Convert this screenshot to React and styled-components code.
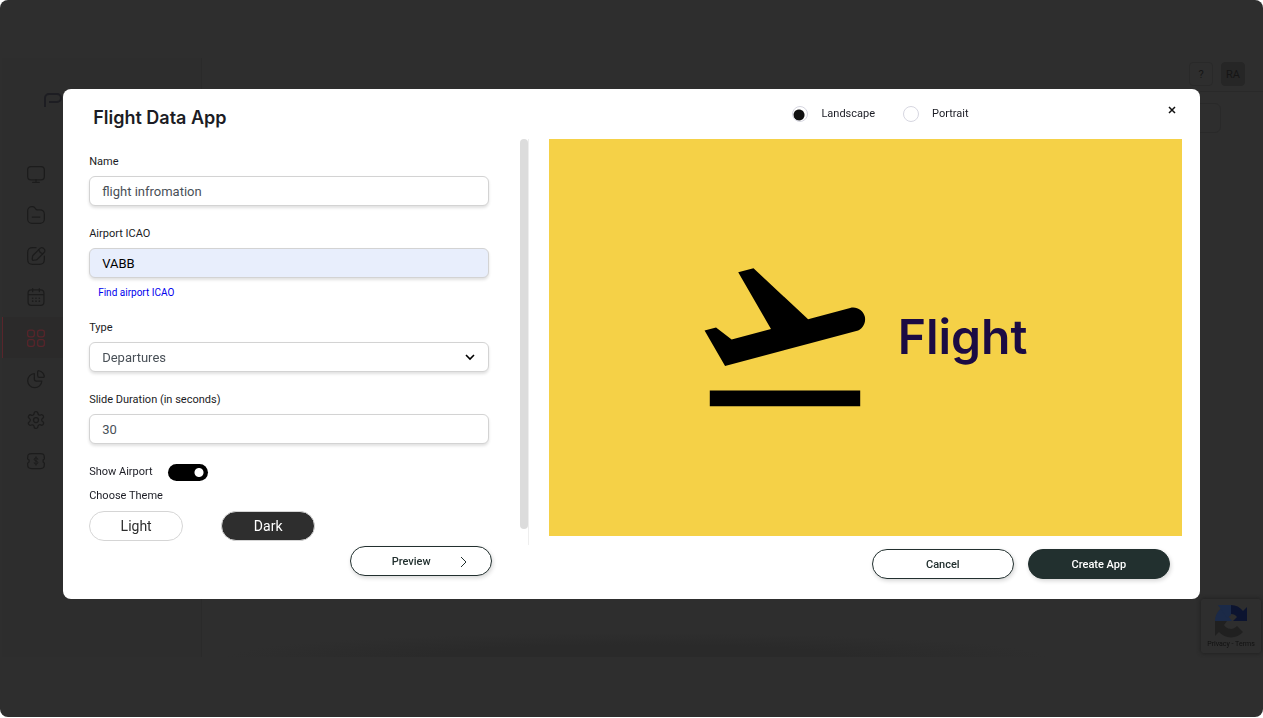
import React, { useState } from 'react';
import styled, { createGlobalStyle } from 'styled-components';

const GlobalStyle = createGlobalStyle`
  * {
    box-sizing: border-box;
  }

  body {
    margin: 0;
    background: #fff;
    font-family: Roboto, 'Liberation Sans', sans-serif;
    color: #1b1c24;
  }

  button,
  input,
  select {
    font-family: inherit;
    margin: 0;
  }
`;

/* dimmed dashboard behind the dialog */

const Page = styled.div`
  display: flex;
  flex-direction: column;
  min-height: calc(100vh - 1px);
  padding: 58px 0 60px 2px;
  background: #2e2e2e;
  border-radius: 8px;
`;

const Screen = styled.div`
  flex: 1;
  display: flex;
`;

const Sidebar = styled.nav`
  width: 200px;
  background: #2d2d2d;
  border-right: 1px solid #2a2a2a;
`;

const Brand = styled.div`
  height: 95px;
  padding: 34px 0 0 41px;
  color: #1d1d22;
`;

const NavItem = styled.a`
  display: flex;
  align-items: center;
  height: 41px;
  padding-left: 23px;
  border-left: 1px solid ${({ $active }) => ($active ? '#59252b' : 'transparent')};
  background: ${({ $active }) => ($active ? '#2b2a2a' : 'transparent')};
  color: ${({ $active }) => ($active ? '#59252b' : '#1c1c1c')};
`;

const Main = styled.div`
  flex: 1;
  display: flex;
  flex-direction: column;
  background: radial-gradient(ellipse 410px 24px at 41% 100%, #2a2a2a 50%, #2e2e2e 100%);
`;

const TopBar = styled.header`
  display: flex;
  justify-content: flex-end;
  gap: 8px;
  height: 34px;
  padding: 4px 18px 0 0;
  border-bottom: 1px solid #292929;
`;

const Chip = styled.button`
  width: 24px;
  height: 24px;
  padding: 0;
  border: 1px solid ${({ $filled }) => ($filled ? '#262626' : '#292929')};
  border-radius: 4px;
  background: ${({ $filled }) => ($filled ? '#262626' : 'transparent')};
  color: #151515;
  font-size: 11px;
`;

const Search = styled.div`
  align-self: flex-end;
  width: 300px;
  height: 30px;
  margin: 11px 42px 0 0;
  border: 1px solid #292929;
  border-radius: 6px;
`;

const Captcha = styled.div`
  position: fixed;
  right: 2px;
  bottom: 65px;
  display: flex;
  flex-direction: column;
  align-items: center;
  gap: 2px;
  width: 60px;
  height: 54px;
  padding-top: 5px;
  border-radius: 2px;
  background: #2e2e2e;
  box-shadow: 0 0 4px #1c1c1c;
  color: #111;
  font-size: 7px;
  line-height: 8px;
`;

/* dialog */

const Overlay = styled.div`
  position: absolute;
  top: 0;
  left: 0;
  right: 0;
  display: flex;
  justify-content: center;
  padding-top: 89px;
`;

const Dialog = styled.section`
  display: grid;
  grid-template-columns: minmax(0, 41fr) minmax(0, 59fr);
  width: 90%;
  padding-bottom: 20px;
  border-radius: 8px;
  background: #fff;
`;

const Pane = styled.div`
  display: flex;
  flex-direction: column;
`;

const Title = styled.h1`
  height: 50px;
  margin: 0;
  padding: 17px 0 0 30px;
  font-family: Inter, sans-serif;
  font-size: 18px;
  line-height: 24px;
  font-weight: 600;
`;

const ScrollArea = styled.div`
  display: flex;
  height: 406px;
  border-right: 1px solid #eee;
`;

const Rail = styled.div`
  width: 8px;
  height: 390px;
  border-radius: 4px;
  background: #dcdcdc;
`;

const Form = styled.form`
  flex: 1;
  padding: 14px 31px 0 26px;
`;

const Field = styled.div`
  display: flex;
  flex-direction: column;
  margin-bottom: 19px;
`;

const Label = styled.label`
  font-size: 11px;
  line-height: 18px;
`;

const Input = styled.input`
  width: 100%;
  height: 30px;
  margin-top: 5px;
  padding: 0 12px;
  border: 1px solid #d3d3d3;
  border-radius: 6px;
  background: ${({ $autofilled }) => ($autofilled ? '#e8eefc' : '#fff')};
  box-shadow: 0 2px 3px rgba(0, 0, 0, 0.12);
  color: ${({ $autofilled }) => ($autofilled ? '#000' : '#495057')};
  font-size: 13px;
  outline: none;
`;

const SelectWrap = styled.div`
  position: relative;

  svg {
    position: absolute;
    right: 14px;
    bottom: 10px;
    pointer-events: none;
  }
`;

const Select = styled(Input)`
  display: block;
  appearance: none;
`;

const FindLink = styled.a`
  margin: 6px 0 0 9px;
  font-size: 10px;
  line-height: 18px;
  color: #00e;
  text-decoration: none;

  & + & {
    margin-top: 0;
  }
`;

const LinkField = styled(Field)`
  margin-bottom: 17px;
`;

const SwitchRow = styled.div`
  display: flex;
  align-items: center;
  gap: 15px;
  height: 18px;
  margin-bottom: 6px;
`;

const Switch = styled.input`
  appearance: none;
  width: 40px;
  height: 17px;
  border-radius: 9px;
  background: ${({ checked }) =>
    checked
      ? 'radial-gradient(circle at 31px 50%, #fff 4px, #000 5px)'
      : 'radial-gradient(circle at 9px 50%, #fff 4px, #999 5px)'};
`;

const GroupLabel = styled.div`
  font-size: 11px;
  line-height: 18px;
`;

const Themes = styled.div`
  display: flex;
  gap: 38px;
  margin-top: 6px;
`;

const ThemeButton = styled.button`
  width: 94px;
  height: 30px;
  padding: 0;
  border: 1px solid #d5d5d5;
  border-radius: 15px;
  background: ${({ $selected }) => ($selected ? '#2e2e2e' : '#fff')};
  color: ${({ $selected }) => ($selected ? '#fff' : '#2e2e2e')};
  font-size: 14px;
`;

const Button = styled.button`
  display: flex;
  align-items: center;
  justify-content: center;
  gap: 28px;
  width: 142px;
  height: 30px;
  padding: 1px 0 0;
  border: 1px solid #22302f;
  border-radius: 15px;
  background: ${({ $primary }) => ($primary ? '#22302f' : '#fff')};
  box-shadow: 1px 2px 4px rgba(0, 0, 0, 0.16);
  color: ${({ $primary }) => ($primary ? '#fff' : '#22302f')};
  font-size: 11px;
  font-weight: 500;
`;

const PreviewButton = styled(Button)`
  padding-left: 16px;
`;

const Actions = styled.div`
  display: flex;
  justify-content: flex-end;
  gap: 14px;
  margin-top: ${({ $top }) => $top}px;
  padding-right: ${({ $right }) => $right}px;
`;

const PreviewPane = styled(Pane)`
  padding: 0 18px 0 20px;
`;

const PreviewHeader = styled.div`
  display: grid;
  grid-template-columns: 1fr auto 1fr;
  align-items: center;
  height: 50px;
`;

const Orientation = styled.div`
  grid-column: 2;
  display: flex;
  gap: 28px;
  margin-left: 30px;
`;

const RadioLabel = styled.label`
  display: flex;
  align-items: center;
  gap: 13px;
  font-size: 11px;
  line-height: 18px;
`;

const Radio = styled.input`
  appearance: none;
  width: 16px;
  height: 16px;
  border: 1px solid #d6d6e0;
  border-radius: 50%;
  background: ${({ checked }) =>
    checked ? 'radial-gradient(circle at 6px 8px, #111 5px, transparent 6px)' : '#fff'};
`;

const Close = styled.button`
  justify-self: end;
  display: flex;
  padding: 6px;
  margin: 0 0 8px;
  border: 0;
  background: none;
  color: #111;
`;

const Preview = styled.div`
  display: flex;
  align-items: center;
  justify-content: center;
  gap: 18px;
  aspect-ratio: 51 / 32;
  padding-right: 14px;
  background: #f5d147;
`;

const PreviewText = styled.span`
  color: #1b0b43;
  font-family: Inter, sans-serif;
  font-size: 48px;
  line-height: 60px;
  font-weight: 600;
`;

const Icon = ({ children, size = 20 }) => (
  <svg
    width={size}
    height={size}
    viewBox="0 0 24 24"
    fill="none"
    stroke="currentColor"
    strokeWidth="1.5"
    strokeLinecap="round"
    strokeLinejoin="round"
    aria-hidden="true"
  >
    {children}
  </svg>
);

const navItems = [
  {
    name: 'Screens',
    icon: (
      <>
        <rect x="2" y="3" width="20" height="16" rx="4" />
        <path d="M12 19v3M8 22h8" />
      </>
    ),
  },
  {
    name: 'Files',
    icon: (
      <>
        <path d="M2 7a5 5 0 0 1 5-5h.8c1.400 0 2 .4 2.800 1.400l1.200 1.500c.4.6.8.8 1.800.8H17a5 5 0 0 1 5 5V17a5 5 0 0 1-5 5H7a5 5 0 0 1-5-5z" />
        <path d="M7.500 14.500h9" />
      </>
    ),
  },
  {
    name: 'Compose',
    icon: (
      <>
        <path d="M12 2H8C3.500 2 2 3.500 2 8v8c0 4.500 1.500 6 6 6h8c4.500 0 6-1.500 6-6v-4" />
        <path d="M16.500 3.200 8.600 11.100c-.3.300-.6.900-.7 1.300l-.4 3c-.2 1.100.6 1.900 1.700 1.700l3-.4c.4-.1 1-.4 1.300-.7L21.400 8.100c1.400-1.400 2-3 0-5s-3.500-1.300-4.900.1z" />
        <path d="M15.200 4.500c.7 2.500 2.300 4.100 4.800 4.800" />
      </>
    ),
  },
  {
    name: 'Schedule',
    icon: (
      <>
        <path d="M8 2v3.500M16 2v3.500M3 9h18" />
        <rect x="2.500" y="3.500" width="19" height="18.500" rx="4" />
        <path d="M8 13.500h.01M12 13.500h.01M16 13.500h.01M8 17h.01M12 17h.01M16 17h.01" strokeWidth="2" />
      </>
    ),
  },
  {
    name: 'Apps',
    active: true,
    icon: (
      <>
        <rect x="2" y="2.500" width="8" height="8" rx="2.500" />
        <rect x="14" y="2.500" width="8" height="8" rx="2.500" />
        <rect x="2" y="14" width="8" height="8" rx="2.500" />
        <rect x="14" y="14" width="8" height="8" rx="2.500" />
      </>
    ),
  },
  {
    name: 'Reports',
    icon: (
      <>
        <path d="M14 3.500c0-1 .6-1.600 1.600-1.400a8.500 8.500 0 0 1 6.300 6.300c.2 1-.4 1.600-1.400 1.600H16a2 2 0 0 1-2-2z" />
        <path d="M10 5.500a8.500 8.500 0 1 0 9 9h-6.500A2.500 2.500 0 0 1 10 12z" />
      </>
    ),
  },
  {
    name: 'Settings',
    icon: (
      <>
        <path d="M9.700 4.100a2.300 2.300 0 0 1 4.600 0 2.300 2.300 0 0 0 3.300 1.900 2.300 2.300 0 0 1 2.300 4 2.300 2.300 0 0 0 0 3.900 2.300 2.300 0 0 1-2.300 4 2.300 2.300 0 0 0-3.300 1.900 2.300 2.300 0 0 1-4.600 0A2.300 2.300 0 0 0 6.400 18a2.300 2.300 0 0 1-2.300-4 2.300 2.300 0 0 0 0-3.900 2.300 2.300 0 0 1 2.300-4 2.300 2.300 0 0 0 3.300-2z" />
        <circle cx="12" cy="12" r="3" />
      </>
    ),
  },
  {
    name: 'Billing',
    icon: (
      <>
        <path d="M20.500 12A2.500 2.500 0 0 1 22 9.500V8c0-4-1-5-5-5H7C3 3 2 4 2 8v1.500a2.600 2.600 0 0 1 0 5V16c0 4 1 5 5 5h10c4 0 5-1 5-5v-1.500a2.500 2.500 0 0 1-1.500-2.500z" />
        <path
          d="M14.200 10c0-1-.9-1.700-2.200-1.700s-2.200.6-2.200 1.800c0 2.400 4.400 1.300 4.400 3.700 0 1.200-.9 1.900-2.200 1.900s-2.200-.7-2.200-1.700M12 7v10"
          strokeWidth="1.2"
        />
      </>
    ),
  },
];

const Dashboard = () => (
  <Page>
    <Screen>
      <Sidebar>
        <Brand>
          <svg width="44" height="16" viewBox="0 0 44 16" fill="none" stroke="currentColor" strokeWidth="2">
            <path d="M2 15V6a4 4 0 0 1 4-4h8a4 4 0 0 1 0 8H6" />
          </svg>
        </Brand>
        {navItems.map(({ name, icon, active }) => (
          <NavItem key={name} href="#" aria-label={name} $active={active}>
            <Icon>{icon}</Icon>
          </NavItem>
        ))}
      </Sidebar>
      <Main>
        <TopBar>
          <Chip>?</Chip>
          <Chip $filled>RA</Chip>
        </TopBar>
        <Search />
      </Main>
    </Screen>
    <Captcha>
      <svg width="34" height="34" viewBox="0 0 34 34" aria-hidden="true">
        <path d="M1 17A16 16 0 0 1 17 1v9a7 7 0 0 0-3 2l4 5z" fill="#1b2a48" />
        <path d="M4 1h13v10l-4 3z" fill="#1b2a48" />
        <path d="M17 1a16 16 0 0 1 12 6l4-4v14H19l4-4a7 7 0 0 0-6-3z" fill="#0c1430" />
        <path d="M1 17h12l-3 4a8 8 0 0 0 13 1l6 6A16 16 0 0 1 5 28l-4 4z" fill="#202020" />
      </svg>
      <span>Privacy - Terms</span>
    </Captcha>
  </Page>
);

const App = () => {
  const [name, setName] = useState('flight infromation');
  const [icao, setIcao] = useState('VABB');
  const [duration, setDuration] = useState('30');
  const [showAirport, setShowAirport] = useState(true);
  const [theme, setTheme] = useState('Dark');
  const [orientation, setOrientation] = useState('Landscape');

  return (
    <>
      <GlobalStyle />
      <Dashboard />
      <Overlay>
        <Dialog role="dialog" aria-labelledby="dialog-title">
          <Pane>
            <Title id="dialog-title">Flight Data App</Title>
            <ScrollArea>
              <Form>
                <Field>
                  <Label htmlFor="name">Name</Label>
                  <Input id="name" value={name} onChange={(e) => setName(e.target.value)} />
                </Field>
                <LinkField>
                  <Label htmlFor="icao">Airport ICAO</Label>
                  <Input id="icao" $autofilled value={icao} onChange={(e) => setIcao(e.target.value)} />
                  <FindLink href="#">Find airport ICAO</FindLink>
                </LinkField>
                <Field>
                  <Label htmlFor="type">Type</Label>
                  <SelectWrap>
                    <Select as="select" id="type" defaultValue="Departures">
                      <option>Departures</option>
                      <option>Arrivals</option>
                    </Select>
                    <svg width="10" height="10" viewBox="0 0 10 10" fill="none" stroke="#000" strokeWidth="1.6">
                      <path d="M1 3l4 4 4-4" />
                    </svg>
                  </SelectWrap>
                </Field>
                <Field>
                  <Label htmlFor="duration">Slide Duration (in seconds)</Label>
                  <Input id="duration" value={duration} onChange={(e) => setDuration(e.target.value)} />
                </Field>
                <SwitchRow>
                  <Label htmlFor="show-airport">Show Airport</Label>
                  <Switch
                    id="show-airport"
                    type="checkbox"
                    role="switch"
                    checked={showAirport}
                    onChange={() => setShowAirport(!showAirport)}
                  />
                </SwitchRow>
                <GroupLabel>Choose Theme</GroupLabel>
                <Themes>
                  {['Light', 'Dark'].map((item) => (
                    <ThemeButton key={item} type="button" $selected={theme === item} onClick={() => setTheme(item)}>
                      {item}
                    </ThemeButton>
                  ))}
                </Themes>
              </Form>
              <Rail />
            </ScrollArea>
            <Actions $top={1} $right={37}>
              <PreviewButton>
                Preview
                <svg width="8" height="12" viewBox="0 0 8 12" fill="none" stroke="currentColor">
                  <path d="M2 1l5 5-5 5" />
                </svg>
              </PreviewButton>
            </Actions>
          </Pane>
          <PreviewPane>
            <PreviewHeader>
              <Orientation>
                {['Landscape', 'Portrait'].map((item) => (
                  <RadioLabel key={item}>
                    <Radio
                      type="radio"
                      name="orientation"
                      checked={orientation === item}
                      onChange={() => setOrientation(item)}
                    />
                    {item}
                  </RadioLabel>
                ))}
              </Orientation>
              <Close aria-label="Close">
                <svg width="8" height="8" viewBox="0 0 8 8" stroke="currentColor" strokeWidth="1.5">
                  <path d="M1 1l6 6M7 1L1 7" />
                </svg>
              </Close>
            </PreviewHeader>
            <Preview>
              <svg width="190" height="190" viewBox="0 0.25 24 24" aria-hidden="true">
                <path d="M2.500 19h19v2h-19zM22.070 9.640c-.21-.8-1.040-1.280-1.840-1.060L14.920 10l-6.900-6.430-1.930.51 4.140 7.170-4.970 1.330-1.970-1.540-1.450.39 2.590 4.490L21 11.490c.81-.23 1.280-1.050 1.070-1.850z" />
              </svg>
              <PreviewText>Flight</PreviewText>
            </Preview>
            <Actions $top={13} $right={12}>
              <Button>Cancel</Button>
              <Button $primary>Create App</Button>
            </Actions>
          </PreviewPane>
        </Dialog>
      </Overlay>
    </>
  );
};

export default App;
